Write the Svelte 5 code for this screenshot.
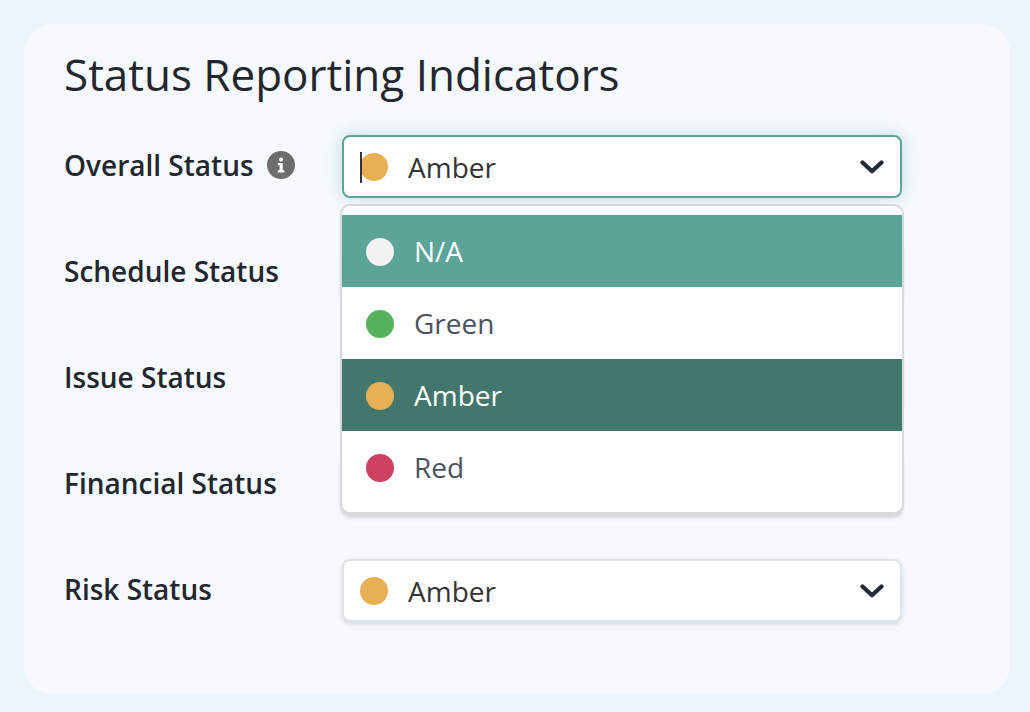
<script>
  const statuses = [
    { label: 'Overall Status', value: 'Amber', info: true, open: true },
    { label: 'Schedule Status', covered: true },
    { label: 'Issue Status', covered: true },
    { label: 'Financial Status', covered: true },
    { label: 'Risk Status', value: 'Amber' }
  ];
  const options = [
    { name: 'N/A', dot: '#f1f1f1', cls: 'hover' },
    { name: 'Green', dot: '#56b15c', cls: '' },
    { name: 'Amber', dot: '#e8af55', cls: 'selected' },
    { name: 'Red', dot: '#cd4260', cls: '' }
  ];
</script>

<div class="page">
  <section class="card">
    <h1>Status Reporting Indicators</h1>
    <div class="rows">
      {#each statuses as s}
        <div class="row">
          <div class="label">
            <span>{s.label}</span>
            {#if s.info}
              <svg class="info" viewBox="0 0 28 28" aria-hidden="true">
                <circle cx="14" cy="14" r="14" fill="#6d6d6d" />
                <circle cx="14" cy="8.4" r="2" fill="#fff" />
                <path d="M10.8 12h4.900v7.200h1.700V21.400h-6.600v-2.200h1.800v-5h-1.800z" fill="#fff" />
              </svg>
            {/if}
          </div>
          <div class="field">
            <div class="select" class:focused={s.open}>
              {#if s.open}<span class="caret"></span>{/if}
              {#if !s.covered}
                <span class="dot amber"></span>
                <span class="value">{s.value}</span>
                <svg class="chevron" viewBox="0 0 24 14" aria-hidden="true">
                  <path d="M2.500 2.500l9.500 8.800 9.500-8.800" fill="none" stroke="#232a33" stroke-width="4.200" stroke-linecap="round" stroke-linejoin="round" />
                </svg>
              {/if}
            </div>
            {#if s.open}
              <ul class="menu">
                {#each options as o}
                  <li class={o.cls}>
                    <span class="dot" style="background: {o.dot}"></span>
                    {o.name}
                  </li>
                {/each}
              </ul>
            {/if}
          </div>
        </div>
      {/each}
    </div>
  </section>
</div>

<style>
  :global(body) {
    margin: 0;
    background: #ecf4fe;
    font-family: "Open Sans", "Noto Sans", sans-serif;
  }
  .page {
    padding: 24px 20px 18px 24px;
    height: 712px;
    box-sizing: border-box;
  }
  .card {
    background: #f6faff;
    border-radius: 28px;
    height: 670px;
    padding: 20px 108px 0 40px;
    box-sizing: border-box;
  }
  h1 {
    margin: 0 0 31px;
    font-size: 44px;
    line-height: 60px;
    font-weight: 400;
    color: #23272d;
  }
  .rows {
    display: flex;
    flex-direction: column;
    gap: 43px;
  }
  .row {
    display: flex;
    align-items: center;
    height: 63px;
  }
  .label {
    width: 278px;
    flex: none;
    display: flex;
    align-items: center;
    gap: 13px;
    font-size: 28px;
    font-weight: 600;
    color: #23272d;
    margin-top: -3px;
  }
  .info {
    width: 28px;
    height: 28px;
  }
  .field {
    position: relative;
    flex: 1;
  }
  .select {
    position: relative;
    height: 63px;
    box-sizing: border-box;
    display: flex;
    align-items: center;
    padding: 0 16px;
    background: #fff;
    border: 2px solid #e2e3e5;
    border-radius: 8px;
    box-shadow: 0 2px 4px rgba(0, 0, 0, 0.14);
    font-size: 28px;
    color: #333;
  }
  .select.focused {
    border-color: #5ca497;
    box-shadow: 0 0 18px rgba(92, 164, 151, 0.35);
  }
  .caret {
    position: absolute;
    left: 16px;
    top: 15px;
    width: 2px;
    height: 31px;
    background: #333;
  }
  .dot {
    width: 28px;
    height: 28px;
    border-radius: 50%;
    flex: none;
  }
  .amber {
    background: #e8af55;
  }
  .value {
    margin-left: 20px;
  }
  .chevron {
    margin-left: auto;
    width: 24px;
    height: 14px;
  }
  .menu {
    position: absolute;
    z-index: 2;
    left: 0;
    right: 0;
    top: 71px;
    margin: 0;
    padding: 9px 0;
    list-style: none;
    background: #fff;
    border-radius: 8px;
    box-shadow: 0 0 0 2px #d6d9da, 0 2px 4px rgba(0, 0, 0, 0.12);
  }
  li {
    height: 72px;
    display: flex;
    align-items: center;
    gap: 20px;
    padding: 0 24px;
    font-size: 28px;
    color: #4a5361;
  }
  li .dot {
    margin-top: 1px;
  }
  li.hover {
    background: #5ca497;
    color: #fff;
  }
  li.selected {
    background: #43776e;
    color: #fff;
  }
</style>
